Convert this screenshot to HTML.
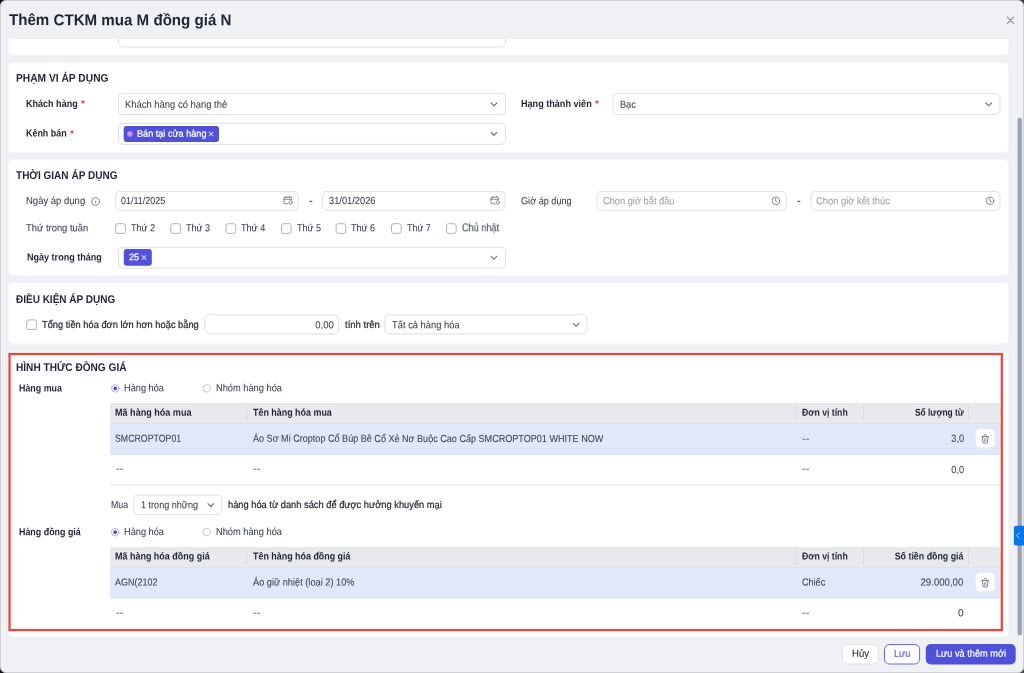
<!DOCTYPE html>
<html lang="vi">
<head>
<meta charset="utf-8">
<title>Thêm CTKM mua M đồng giá N</title>
<style>
*{box-sizing:border-box;margin:0;padding:0}
html,body{width:1024px;height:673px;overflow:hidden;background:#101218;font-family:"Liberation Sans",Arial,sans-serif}
#dlg{position:absolute;left:0;top:0;width:1024px;height:673px;background:#eff1f5;border:1px solid #cfd0d4;border-radius:5.8px;overflow:hidden}
#wrap{position:absolute;left:0;top:0;width:1024px;height:673px;overflow:hidden;will-change:transform}
.abs,.t{position:absolute}
.t{white-space:pre;line-height:1;transform-origin:0 0}
header,section,footer{display:contents}
svg{position:absolute;overflow:visible}
</style>
</head>
<body>
<div class="abs" style="left:1012px;top:0;width:12px;height:12px;background:#3a4050"></div>
<div class="abs" style="left:1012px;top:661px;width:12px;height:12px;background:#46484e"></div>
<div id="dlg"></div>
<div id="wrap">
<!-- cards -->
<svg width="1024" height="673" viewBox="0 0 1024 673" style="left:0;top:0">
<g fill="#fff">
<rect x="8.4" y="30" width="1000" height="24.9" rx="4.2"/>
<rect x="118.5" y="29" width="386.95" height="17.95" rx="4" fill="#fff" stroke="#dcdfe5"/>
<rect x="4" y="1" width="1016" height="37.8" fill="#eff1f5"/>
<rect x="8.4" y="62.65" width="1000" height="89.9" rx="4.2"/>
<rect x="8.4" y="160" width="1000" height="115.2" rx="4.2"/>
<rect x="8.4" y="283" width="1000" height="60.5" rx="4.2"/>
<rect x="8.4" y="351.6" width="1000" height="284.9" rx="4.2"/>
</g>
<g fill="#e8e9ec">
<rect x="110" y="403" width="890.4" height="20.75"/>
<rect x="110" y="546.75" width="890.4" height="20.75"/>
</g>
<g fill="#e1e8fa">
<rect x="110" y="423.75" width="890.4" height="30.75"/>
<rect x="110" y="567.5" width="890.4" height="30.75"/>
</g>
<rect x="110" y="484.5" width="890.4" height="1" fill="#e2e4e9"/>
<rect x="110" y="423.2" width="890.4" height="0.7" fill="#dadce1"/><rect x="110" y="566.95" width="890.4" height="0.7" fill="#dadce1"/>
<rect x="110" y="454" width="890.4" height="0.7" fill="#d3daee"/><rect x="110" y="597.75" width="890.4" height="0.7" fill="#d3daee"/>
<g fill="#d9dbe0">
<rect x="246.3" y="405.2" width="1" height="15.2"/><rect x="795.5" y="405.2" width="1" height="15.2"/><rect x="863" y="405.2" width="1" height="15.2"/><rect x="968" y="405.2" width="1" height="15.2"/>
<rect x="246.3" y="548.95" width="1" height="15.2"/><rect x="795.5" y="548.95" width="1" height="15.2"/><rect x="863" y="548.95" width="1" height="15.2"/><rect x="968" y="548.95" width="1" height="15.2"/>
</g>
</svg>

<!-- controls -->
<svg width="1024" height="673" viewBox="0 0 1024 673" style="left:0;top:0">
<rect x="115.70" y="223.70" width="9.7" height="9.7" rx="2.2" fill="#fff" stroke="#abb3c5" stroke-width="1"/>
<rect x="170.80" y="223.70" width="9.7" height="9.7" rx="2.2" fill="#fff" stroke="#abb3c5" stroke-width="1"/>
<rect x="226.00" y="223.70" width="9.7" height="9.7" rx="2.2" fill="#fff" stroke="#abb3c5" stroke-width="1"/>
<rect x="281.50" y="223.70" width="9.7" height="9.7" rx="2.2" fill="#fff" stroke="#abb3c5" stroke-width="1"/>
<rect x="336.10" y="223.70" width="9.7" height="9.7" rx="2.2" fill="#fff" stroke="#abb3c5" stroke-width="1"/>
<rect x="391.50" y="223.70" width="9.7" height="9.7" rx="2.2" fill="#fff" stroke="#abb3c5" stroke-width="1"/>
<rect x="446.50" y="223.70" width="9.7" height="9.7" rx="2.2" fill="#fff" stroke="#abb3c5" stroke-width="1"/>
<rect x="26.70" y="319.90" width="9.7" height="9.7" rx="2.2" fill="#fff" stroke="#abb3c5" stroke-width="1"/>
<rect x="118.50" y="93.40" width="386.95" height="21.15" rx="4.3" fill="#fff" stroke="#dcdfe5" stroke-width="1"/>
<rect x="118.50" y="123.20" width="386.95" height="21.20" rx="4.3" fill="#fff" stroke="#dcdfe5" stroke-width="1"/>
<rect x="613.00" y="93.40" width="387.00" height="21.15" rx="4.3" fill="#fff" stroke="#dcdfe5" stroke-width="1"/>
<rect x="115.80" y="191.40" width="182.20" height="18.75" rx="4.3" fill="#fff" stroke="#dcdfe5" stroke-width="1"/>
<rect x="322.70" y="191.40" width="182.30" height="18.75" rx="4.3" fill="#fff" stroke="#dcdfe5" stroke-width="1"/>
<rect x="597.00" y="191.40" width="189.30" height="18.75" rx="4.3" fill="#fff" stroke="#dcdfe5" stroke-width="1"/>
<rect x="811.00" y="191.40" width="189.00" height="18.75" rx="4.3" fill="#fff" stroke="#dcdfe5" stroke-width="1"/>
<rect x="118.50" y="247.20" width="386.95" height="20.90" rx="4.3" fill="#fff" stroke="#dcdfe5" stroke-width="1"/>
<rect x="204.90" y="314.80" width="133.50" height="19.15" rx="4.3" fill="#fff" stroke="#dcdfe5" stroke-width="1"/>
<rect x="384.90" y="314.80" width="202.10" height="19.15" rx="4.3" fill="#fff" stroke="#dcdfe5" stroke-width="1"/>
<rect x="133.70" y="494.95" width="88.00" height="19.55" rx="4.3" fill="#fff" stroke="#dcdfe5" stroke-width="1"/>
<rect x="975.30" y="428.80" width="19.60" height="19.10" rx="4.6" fill="#fff" stroke="#eaecf1" stroke-width="1"/>
<rect x="975.30" y="572.55" width="19.60" height="19.10" rx="4.6" fill="#fff" stroke="#eaecf1" stroke-width="1"/>
<rect x="123.70" y="126.00" width="95.30" height="16.10" rx="3" fill="#4f51d8"/>
<rect x="123.80" y="248.90" width="28.00" height="16.90" rx="3" fill="#4f51d8"/>
<rect x="842.50" y="644.60" width="35.70" height="19.40" rx="4.8" fill="#fff" stroke="#dfe2e8" stroke-width="1"/>
<rect x="884.50" y="644.60" width="35.10" height="19.40" rx="4.8" fill="#fff" stroke="#6466de" stroke-width="1"/>
<rect x="925.80" y="644.00" width="89.90" height="20.50" rx="5" fill="#4f51d8"/>
</svg>
<div class="abs" style="left:127px;top:130.6px;width:6px;height:6px;border-radius:50%;background:radial-gradient(circle at 45% 45%,#d9a8f0 0,#c583e6 45%,#a768dd 100%)"></div>





<!-- red highlight -->


<!-- footer -->

<!-- scrollbar -->

<!-- icons -->
<svg id="icons" width="1024" height="673" viewBox="0 0 1024 673" style="left:0;top:0" fill="none" stroke-linecap="round" stroke-linejoin="round">
<rect x="1017.6" y="117.8" width="4.3" height="517.6" rx="2.15" fill="#9ca2b1"/>
<rect x="1013.9" y="525.8" width="14" height="19.8" rx="2.4" fill="#0a73e6"/>
<path d="M1019.1 533.1 L1016.6 535.6 L1019.1 538.1" stroke="#e4eeff" stroke-width="0.85"/>
<g stroke="#6e7686" stroke-width="1.2">
<!-- select chevrons -->
<path d="M491.2 103 L494 105.8 L496.8 103"/>
<path d="M491.2 132.5 L494 135.3 L496.8 132.5"/>
<path d="M985.9 103 L988.7 105.8 L991.5 103"/>
<path d="M491.2 256.3 L494 259.1 L496.8 256.3"/>
<path d="M573.3 323.3 L576.1 326.1 L578.9 323.3"/>
<path d="M208 503.7 L210.8 506.5 L213.6 503.7"/>
</g>
<g stroke="#727a8a" stroke-width="0.9">
<!-- calendar icons -->
<g id="cal1">
<path d="M284 198.2 a1 1 0 0 1 1-1 h5.6 a1 1 0 0 1 1 1 v1.6 M284 198.2 v4.6 a1 1 0 0 0 1 1 h3.2"/>
<path d="M284 199.3 h7.6"/>
<path d="M285.9 196.3 v1 M289.7 196.3 v1"/>
<circle cx="290.8" cy="202.5" r="1.7"/>
</g>
<g transform="translate(207 0)">
<path d="M284 198.2 a1 1 0 0 1 1-1 h5.6 a1 1 0 0 1 1 1 v1.6 M284 198.2 v4.6 a1 1 0 0 0 1 1 h3.2"/>
<path d="M284 199.3 h7.6"/>
<path d="M285.9 196.3 v1 M289.7 196.3 v1"/>
<circle cx="290.8" cy="202.5" r="1.7"/>
</g>
<!-- clocks -->
<circle cx="775.9" cy="200.8" r="3.7"/>
<path d="M775.7 198.8 v2 l1.3 1.4" stroke-width="1"/>
<circle cx="990" cy="200.8" r="3.7"/>
<path d="M989.8 198.8 v2 l1.3 1.4" stroke-width="1"/>
<!-- info -->
<circle cx="95.6" cy="201.5" r="3.95"/>
<path d="M95.7 201.4 v1.6" stroke-width="1"/>
</g>
<!-- trash icons -->
<g stroke="#6e7686" stroke-width="0.9">
<g id="tr1" transform="translate(0 0.4)">
<path d="M981.7 436.4 h6.9"/>
<path d="M983.7 436.2 c0-1.3 0.5-2 1.45-2 s1.45 0.7 1.45 2"/>
<path d="M982.4 436.6 l0.45 5.3 a0.9 0.9 0 0 0 0.9 0.8 h2.8 a0.9 0.9 0 0 0 0.9 -0.8 l0.45 -5.3"/>
<path d="M984.4 438.4 v2.6 M985.9 438.4 v2.6" stroke-width="0.7"/>
</g>
<g transform="translate(0 144.15)">
<path d="M981.7 436.4 h6.9"/>
<path d="M983.7 436.2 c0-1.3 0.5-2 1.45-2 s1.45 0.7 1.45 2"/>
<path d="M982.4 436.6 l0.45 5.3 a0.9 0.9 0 0 0 0.9 0.8 h2.8 a0.9 0.9 0 0 0 0.9 -0.8 l0.45 -5.3"/>
<path d="M984.4 438.4 v2.6 M985.9 438.4 v2.6" stroke-width="0.7"/>
</g>
</g>
<!-- close x -->
<path d="M1007.4 17.2 L1013.6 23.4 M1013.6 17.2 L1007.4 23.4" stroke="#8b9099" stroke-width="1.15"/>
<!-- tab chevron -->


<!-- radios -->
<g stroke-width="1">
<circle cx="115.2" cy="388.4" r="3.7" fill="#fff" stroke="#adaef1"/><circle cx="115.2" cy="388.4" r="1.85" fill="#4a4bd8" stroke="none"/>
<circle cx="206.75" cy="388.4" r="3.7" fill="#fff" stroke="#c3c8d5"/>
<circle cx="115.2" cy="532.15" r="3.7" fill="#fff" stroke="#adaef1"/><circle cx="115.2" cy="532.15" r="1.85" fill="#4a4bd8" stroke="none"/>
<circle cx="206.75" cy="532.15" r="3.7" fill="#fff" stroke="#c3c8d5"/>
</g>

<!-- red highlight -->
<rect x="9.55" y="353.95" width="992.25" height="276.05" stroke="#e9463f" stroke-width="2.25" stroke-linejoin="miter"/>

</svg>

<!-- texts -->
<header class="dialog-title">
<span class="t" style="top:12px;font-size:15.8px;color:#1f2433;font-weight:700;left:9.0px;transform:translateY(0.10px) scaleX(0.9567) rotate(0.032deg);">Thêm CTKM mua M đồng giá N</span>
</header>
<section class="scope">
<span class="t" style="top:72px;font-size:11.2px;color:#1f2433;font-weight:700;left:16.0px;transform:translateY(0.70px) scaleX(0.9147) rotate(0.032deg);">PHẠM VI ÁP DỤNG</span>
<span class="t" style="top:99px;font-size:10.2px;color:#1f2433;font-weight:700;left:26.3px;transform:translateY(0.00px) scaleX(0.8866) rotate(0.032deg);">Khách hàng</span>
<span class="t" style="top:99px;font-size:10px;color:#e5392d;font-weight:700;left:80.7px;transform:translateY(0.10px) scaleX(1.0000) rotate(0.032deg);">*</span>
<span class="t" style="top:128px;font-size:10.2px;color:#1f2433;font-weight:700;left:26.3px;transform:translateY(0.50px) scaleX(0.8767) rotate(0.032deg);">Kênh bán</span>
<span class="t" style="top:129px;font-size:10px;color:#e5392d;font-weight:700;left:70.1px;transform:translateY(0.00px) scaleX(1.0000) rotate(0.032deg);">*</span>
<span class="t" style="top:99px;font-size:10.2px;color:#3b4252;-webkit-text-stroke:0.06px currentColor;left:124.8px;transform:translateY(0.65px) scaleX(0.9251) rotate(0.032deg);">Khách hàng có hạng thẻ</span>
<span class="t" style="top:128px;font-size:9.6px;color:#ffffff;-webkit-text-stroke:0.22px currentColor;left:136.5px;transform:translateY(0.80px) scaleX(0.9506) rotate(0.032deg);">Bán tại cửa hàng</span>
<span class="t" style="top:128px;font-size:10.5px;color:#e9e9fc;-webkit-text-stroke:0.06px currentColor;left:208.1px;transform:translateY(0.60px) scaleX(1.0000) rotate(0.032deg);">×</span>
<span class="t" style="top:99px;font-size:10.2px;color:#1f2433;font-weight:700;left:521.3px;transform:translateY(0.00px) scaleX(0.8921) rotate(0.032deg);">Hạng thành viên</span>
<span class="t" style="top:99px;font-size:10px;color:#e5392d;font-weight:700;left:595.0px;transform:translateY(0.10px) scaleX(1.0000) rotate(0.032deg);">*</span>
<span class="t" style="top:99px;font-size:10.2px;color:#3b4252;-webkit-text-stroke:0.06px currentColor;left:620.0px;transform:translateY(0.65px) scaleX(0.8996) rotate(0.032deg);">Bạc</span>
</section>
<section class="time">
<span class="t" style="top:170px;font-size:11.2px;color:#1f2433;font-weight:700;left:16.0px;transform:translateY(0.00px) scaleX(0.8971) rotate(0.032deg);">THỜI GIAN ÁP DỤNG</span>
<span class="t" style="top:196px;font-size:10.2px;color:#3b4252;-webkit-text-stroke:0.06px currentColor;left:25.8px;transform:translateY(0.00px) scaleX(0.9330) rotate(0.032deg);">Ngày áp dụng</span>
<span class="t" style="top:196px;font-size:10.2px;color:#3b4252;-webkit-text-stroke:0.06px currentColor;left:121.3px;transform:translateY(0.05px) scaleX(0.8799) rotate(0.032deg);">01/11/2025</span>
<span class="t" style="top:195px;font-size:11px;color:#5d6475;font-weight:700;left:308.5px;transform:translateY(0.30px) scaleX(1.0000) rotate(0.032deg);">-</span>
<span class="t" style="top:196px;font-size:10.2px;color:#3b4252;-webkit-text-stroke:0.06px currentColor;left:328.5px;transform:translateY(0.05px) scaleX(0.9118) rotate(0.032deg);">31/01/2026</span>
<span class="t" style="top:196px;font-size:10.2px;color:#3b4252;-webkit-text-stroke:0.06px currentColor;left:521.3px;transform:translateY(0.30px) scaleX(0.8968) rotate(0.032deg);">Giờ áp dụng</span>
<span class="t" style="top:196px;font-size:10.2px;color:#9aa1ae;-webkit-text-stroke:0.06px currentColor;left:602.5px;transform:translateY(0.30px) scaleX(0.9094) rotate(0.032deg);">Chọn giờ bắt đầu</span>
<span class="t" style="top:195px;font-size:11px;color:#5d6475;font-weight:700;left:797.0px;transform:translateY(0.30px) scaleX(1.0000) rotate(0.032deg);">-</span>
<span class="t" style="top:196px;font-size:10.2px;color:#9aa1ae;-webkit-text-stroke:0.06px currentColor;left:816.3px;transform:translateY(0.30px) scaleX(0.9214) rotate(0.032deg);">Chọn giờ kết thúc</span>
<span class="t" style="top:223px;font-size:10.2px;color:#3b4252;-webkit-text-stroke:0.06px currentColor;left:25.7px;transform:translateY(0.25px) scaleX(0.9240) rotate(0.032deg);">Thứ trong tuần</span>
<span class="t" style="top:223px;font-size:10.2px;color:#3b4252;-webkit-text-stroke:0.06px currentColor;left:131.0px;transform:translateY(0.35px) scaleX(0.8854) rotate(0.032deg);">Thứ 2</span>
<span class="t" style="top:223px;font-size:10.2px;color:#3b4252;-webkit-text-stroke:0.06px currentColor;left:186.0px;transform:translateY(0.35px) scaleX(0.8854) rotate(0.032deg);">Thứ 3</span>
<span class="t" style="top:223px;font-size:10.2px;color:#3b4252;-webkit-text-stroke:0.06px currentColor;left:241.2px;transform:translateY(0.35px) scaleX(0.8928) rotate(0.032deg);">Thứ 4</span>
<span class="t" style="top:223px;font-size:10.2px;color:#3b4252;-webkit-text-stroke:0.06px currentColor;left:296.7px;transform:translateY(0.35px) scaleX(0.8854) rotate(0.032deg);">Thứ 5</span>
<span class="t" style="top:223px;font-size:10.2px;color:#3b4252;-webkit-text-stroke:0.06px currentColor;left:351.4px;transform:translateY(0.35px) scaleX(0.8854) rotate(0.032deg);">Thứ 6</span>
<span class="t" style="top:223px;font-size:10.2px;color:#3b4252;-webkit-text-stroke:0.06px currentColor;left:406.7px;transform:translateY(0.35px) scaleX(0.8744) rotate(0.032deg);">Thứ 7</span>
<span class="t" style="top:223px;font-size:10.2px;color:#3b4252;-webkit-text-stroke:0.06px currentColor;left:461.7px;transform:translateY(0.35px) scaleX(0.8994) rotate(0.032deg);">Chủ nhật</span>
<span class="t" style="top:252px;font-size:10.2px;color:#1f2433;font-weight:700;left:26.5px;transform:translateY(0.50px) scaleX(0.8870) rotate(0.032deg);">Ngày trong tháng</span>
<span class="t" style="top:252px;font-size:9.7px;color:#ffffff;-webkit-text-stroke:0.22px currentColor;left:128.8px;transform:translateY(0.30px) scaleX(0.9368) rotate(0.032deg);">25</span>
<span class="t" style="top:252px;font-size:10.5px;color:#e9e9fc;-webkit-text-stroke:0.06px currentColor;left:141.0px;transform:translateY(0.10px) scaleX(1.0000) rotate(0.032deg);">×</span>
</section>
<section class="condition">
<span class="t" style="top:294px;font-size:11.2px;color:#1f2433;font-weight:700;left:16.0px;transform:translateY(0.00px) scaleX(0.8932) rotate(0.032deg);">ĐIỀU KIỆN ÁP DỤNG</span>
<span class="t" style="top:320px;font-size:10.2px;color:#1f2433;-webkit-text-stroke:0.22px currentColor;left:42.0px;transform:translateY(0.00px) scaleX(0.9124) rotate(0.032deg);">Tổng tiền hóa đơn lớn hơn hoặc bằng</span>
<span class="t" style="top:320px;font-size:10.2px;color:#3b4252;-webkit-text-stroke:0.06px currentColor;right:690.50px;transform:translateY(0.30px) scaleX(0.9330) rotate(0.032deg);transform-origin:100% 0;">0,00</span>
<span class="t" style="top:320px;font-size:10.2px;color:#1f2433;-webkit-text-stroke:0.22px currentColor;left:344.6px;transform:translateY(0.00px) scaleX(0.9334) rotate(0.032deg);">tính trên</span>
<span class="t" style="top:320px;font-size:10.2px;color:#3b4252;-webkit-text-stroke:0.06px currentColor;left:391.8px;transform:translateY(0.30px) scaleX(0.9193) rotate(0.032deg);">Tất cả hàng hóa</span>
</section>
<section class="same-price">
<span class="t" style="top:362px;font-size:11.2px;color:#1f2433;font-weight:700;left:16.0px;transform:translateY(0.00px) scaleX(0.9027) rotate(0.032deg);">HÌNH THỨC ĐỒNG GIÁ</span>
<span class="t" style="top:383px;font-size:10.2px;color:#1f2433;font-weight:700;left:19.0px;transform:translateY(0.50px) scaleX(0.8731) rotate(0.032deg);">Hàng mua</span>
<span class="t" style="top:383px;font-size:10.2px;color:#3b4252;-webkit-text-stroke:0.06px currentColor;left:124.3px;transform:translateY(0.20px) scaleX(0.9052) rotate(0.032deg);">Hàng hóa</span>
<span class="t" style="top:383px;font-size:10.2px;color:#3b4252;-webkit-text-stroke:0.06px currentColor;left:216.0px;transform:translateY(0.20px) scaleX(0.9103) rotate(0.032deg);">Nhóm hàng hóa</span>
<span class="t" style="top:407px;font-size:10.1px;color:#1f2433;font-weight:700;left:115.3px;transform:translateY(0.75px) scaleX(0.8974) rotate(0.032deg);">Mã hàng hóa mua</span>
<span class="t" style="top:407px;font-size:10.1px;color:#1f2433;font-weight:700;left:253.0px;transform:translateY(0.75px) scaleX(0.8837) rotate(0.032deg);">Tên hàng hóa mua</span>
<span class="t" style="top:407px;font-size:10.1px;color:#1f2433;font-weight:700;left:801.8px;transform:translateY(0.75px) scaleX(0.8597) rotate(0.032deg);">Đơn vị tính</span>
<span class="t" style="top:407px;font-size:10.1px;color:#1f2433;font-weight:700;right:60.20px;transform:translateY(0.75px) scaleX(0.8298) rotate(0.032deg);transform-origin:100% 0;">Số lượng từ</span>
<span class="t" style="top:527px;font-size:10.2px;color:#1f2433;font-weight:700;left:19.0px;transform:translateY(0.25px) scaleX(0.8735) rotate(0.032deg);">Hàng đồng giá</span>
<span class="t" style="top:526px;font-size:10.2px;color:#3b4252;-webkit-text-stroke:0.06px currentColor;left:124.3px;transform:translateY(0.95px) scaleX(0.9052) rotate(0.032deg);">Hàng hóa</span>
<span class="t" style="top:526px;font-size:10.2px;color:#3b4252;-webkit-text-stroke:0.06px currentColor;left:216.0px;transform:translateY(0.95px) scaleX(0.9103) rotate(0.032deg);">Nhóm hàng hóa</span>
<span class="t" style="top:551px;font-size:10.1px;color:#1f2433;font-weight:700;left:115.3px;transform:translateY(0.50px) scaleX(0.8888) rotate(0.032deg);">Mã hàng hóa đồng giá</span>
<span class="t" style="top:551px;font-size:10.1px;color:#1f2433;font-weight:700;left:253.0px;transform:translateY(0.50px) scaleX(0.8826) rotate(0.032deg);">Tên hàng hóa đồng giá</span>
<span class="t" style="top:551px;font-size:10.1px;color:#1f2433;font-weight:700;left:801.8px;transform:translateY(0.50px) scaleX(0.8597) rotate(0.032deg);">Đơn vị tính</span>
<span class="t" style="top:551px;font-size:10.1px;color:#1f2433;font-weight:700;right:60.20px;transform:translateY(0.50px) scaleX(0.8763) rotate(0.032deg);transform-origin:100% 0;">Số tiền đồng giá</span>
<span class="t" style="top:433px;font-size:10.2px;color:#3b4252;-webkit-text-stroke:0.06px currentColor;left:114.8px;transform:translateY(0.80px) scaleX(0.8618) rotate(0.032deg);">SMCROPTOP01</span>
<span class="t" style="top:433px;font-size:10.2px;color:#3b4252;-webkit-text-stroke:0.06px currentColor;left:253.0px;transform:translateY(0.80px) scaleX(0.8899) rotate(0.032deg);">Áo Sơ Mi Croptop Cổ Búp Bê Cổ Xẻ Nơ Buộc Cao Cấp SMCROPTOP01 WHITE NOW</span>
<span class="t" style="top:464px;font-size:10.2px;color:#717888;-webkit-text-stroke:0.06px currentColor;left:801.8px;transform:translateY(0.00px) scaleX(1.1034) rotate(0.032deg);">--</span>
<span class="t" style="top:433px;font-size:10.2px;color:#3b4252;-webkit-text-stroke:0.06px currentColor;right:60.20px;transform:translateY(0.80px) scaleX(0.9032) rotate(0.032deg);transform-origin:100% 0;">3,0</span>
<span class="t" style="top:464px;font-size:10.2px;color:#717888;-webkit-text-stroke:0.06px currentColor;left:115.5px;transform:translateY(0.00px) scaleX(1.1034) rotate(0.032deg);">--</span>
<span class="t" style="top:464px;font-size:10.2px;color:#717888;-webkit-text-stroke:0.06px currentColor;left:253.0px;transform:translateY(0.00px) scaleX(1.1034) rotate(0.032deg);">--</span>
<span class="t" style="top:434px;font-size:10.2px;color:#717888;-webkit-text-stroke:0.06px currentColor;left:801.8px;transform:translateY(0.00px) scaleX(1.1034) rotate(0.032deg);">--</span>
<span class="t" style="top:465px;font-size:10.2px;color:#3b4252;-webkit-text-stroke:0.06px currentColor;right:60.20px;transform:translateY(0.00px) scaleX(0.9032) rotate(0.032deg);transform-origin:100% 0;">0,0</span>
<span class="t" style="top:500px;font-size:10.2px;color:#3b4252;-webkit-text-stroke:0.06px currentColor;left:110.8px;transform:translateY(0.00px) scaleX(0.8675) rotate(0.032deg);">Mua</span>
<span class="t" style="top:500px;font-size:10.2px;color:#3b4252;-webkit-text-stroke:0.06px currentColor;left:140.5px;transform:translateY(0.30px) scaleX(0.8902) rotate(0.032deg);">1 trong những</span>
<span class="t" style="top:500px;font-size:10.2px;color:#1f2433;-webkit-text-stroke:0.22px currentColor;left:228.0px;transform:translateY(0.00px) scaleX(0.9124) rotate(0.032deg);">hàng hóa từ danh sách để được hưởng khuyến mại</span>
<span class="t" style="top:577px;font-size:10.2px;color:#3b4252;-webkit-text-stroke:0.06px currentColor;left:115.0px;transform:translateY(0.55px) scaleX(0.8828) rotate(0.032deg);">AGN(2102</span>
<span class="t" style="top:577px;font-size:10.2px;color:#3b4252;-webkit-text-stroke:0.06px currentColor;left:253.0px;transform:translateY(0.55px) scaleX(0.9050) rotate(0.032deg);">Áo giữ nhiệt (loại 2) 10%</span>
<span class="t" style="top:577px;font-size:10.2px;color:#3b4252;-webkit-text-stroke:0.06px currentColor;left:801.8px;transform:translateY(0.55px) scaleX(0.8907) rotate(0.032deg);">Chiếc</span>
<span class="t" style="top:577px;font-size:10.2px;color:#3b4252;-webkit-text-stroke:0.06px currentColor;right:60.20px;transform:translateY(0.55px) scaleX(0.9442) rotate(0.032deg);transform-origin:100% 0;">29.000,00</span>
<span class="t" style="top:608px;font-size:10.2px;color:#717888;-webkit-text-stroke:0.06px currentColor;left:115.5px;transform:translateY(0.00px) scaleX(1.1034) rotate(0.032deg);">--</span>
<span class="t" style="top:608px;font-size:10.2px;color:#717888;-webkit-text-stroke:0.06px currentColor;left:253.0px;transform:translateY(0.00px) scaleX(1.1034) rotate(0.032deg);">--</span>
<span class="t" style="top:608px;font-size:10.2px;color:#717888;-webkit-text-stroke:0.06px currentColor;left:801.8px;transform:translateY(0.00px) scaleX(1.1034) rotate(0.032deg);">--</span>
<span class="t" style="top:608px;font-size:10.2px;color:#3b4252;-webkit-text-stroke:0.06px currentColor;right:60.20px;transform:translateY(0.20px) scaleX(1.0000) rotate(0.032deg);transform-origin:100% 0;">0</span>
</section>
<footer class="actions">
<span class="t" style="top:648px;font-size:10.2px;color:#1f2433;-webkit-text-stroke:0.1px currentColor;left:852.0px;transform:translateY(0.80px) scaleX(0.9379) rotate(0.032deg);">Hủy</span>
<span class="t" style="top:648px;font-size:10.2px;color:#4f51d8;-webkit-text-stroke:0.08px currentColor;left:894.0px;transform:translateY(0.80px) scaleX(0.8978) rotate(0.032deg);">Lưu</span>
<span class="t" style="top:648px;font-size:10.2px;color:#ffffff;-webkit-text-stroke:0.2px currentColor;left:935.5px;transform:translateY(0.80px) scaleX(0.9034) rotate(0.032deg);">Lưu và thêm mới</span>
</footer>
</div>
</body>
</html>
